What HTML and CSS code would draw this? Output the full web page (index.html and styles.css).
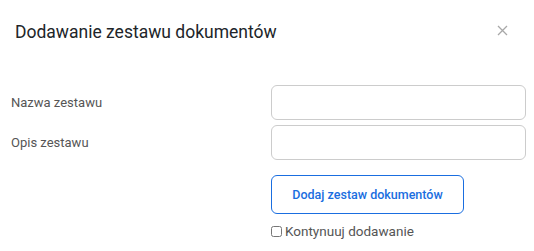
FILE: index.html
```html
<!DOCTYPE html>
<html lang="pl">
<head>
<meta charset="utf-8">
<title>Dodawanie zestawu dokumentów</title>
<link rel="stylesheet" href="styles.css">
</head>
<body>
<div class="modal">
  <div class="modal-header">
    <h1 class="modal-title">Dodawanie zestawu dokumentów</h1>
    <button class="close" type="button" aria-label="Zamknij">
      <svg width="11" height="11" viewBox="0 0 11 11"><path d="M1 1L10 10M10 1L1 10" stroke="#a8a8a8" stroke-width="1.3" fill="none"/></svg>
    </button>
  </div>
  <form class="form">
    <label class="label" for="nazwa">Nazwa zestawu</label>
    <input class="input" id="nazwa" type="text">
    <label class="label" for="opis">Opis zestawu</label>
    <input class="input" id="opis" type="text">
    <div class="actions">
      <button class="btn" type="button">Dodaj zestaw dokumentów</button>
      <label class="check"><input type="checkbox" class="checkbox"><span>Kontynuuj dodawanie</span></label>
    </div>
  </form>
</div>
</body>
</html>
```
FILE: styles.css
```css
html, body {
  margin: 0;
  padding: 0;
  background: #fff;
}
body {
  font-family: Roboto, "Liberation Sans", sans-serif;
  color: #222;
}
.modal {
  width: 534px;
  height: 251px;
  box-sizing: border-box;
}
.modal-header {
  display: flex;
  align-items: center;
  justify-content: space-between;
  height: 64px;
  padding: 0 26px 0 15px;
}
.modal-title {
  margin: 0;
  font-size: 17.5px;
  font-weight: 400;
  color: #212529;
}
.close {
  border: 0;
  background: none;
  padding: 0;
  width: 11px;
  height: 11px;
  display: flex;
  margin-top: -4px;
}
.form {
  display: grid;
  grid-template-columns: 260px 255px;
  row-gap: 5px;
  padding: 21px 8px 0 11px;
  align-items: center;
}
.label {
  font-size: 13px;
  color: #555;
}
.input {
  box-sizing: border-box;
  height: 35px;
  width: 255px;
  margin: 0;
  border: 1px solid #ccc;
  border-radius: 6px;
  background: #fff;
}
.actions {
  grid-column: 2;
  display: flex;
  flex-direction: column;
  align-items: flex-start;
  padding-top: 10px;
  gap: 9px;
}
.btn {
  box-sizing: border-box;
  width: 193px;
  height: 39px;
  border: 1px solid #1a6ee0;
  border-radius: 6px;
  background: #fff;
  color: #1a6ee0;
  font-family: inherit;
  font-size: 12.5px;
  font-weight: 500;
  padding: 0;
}
.check {
  display: flex;
  align-items: center;
  gap: 3px;
  font-size: 13.5px;
  color: #555;
}
.checkbox {
  margin: 0;
  width: 11px;
  height: 11px;
}
```
